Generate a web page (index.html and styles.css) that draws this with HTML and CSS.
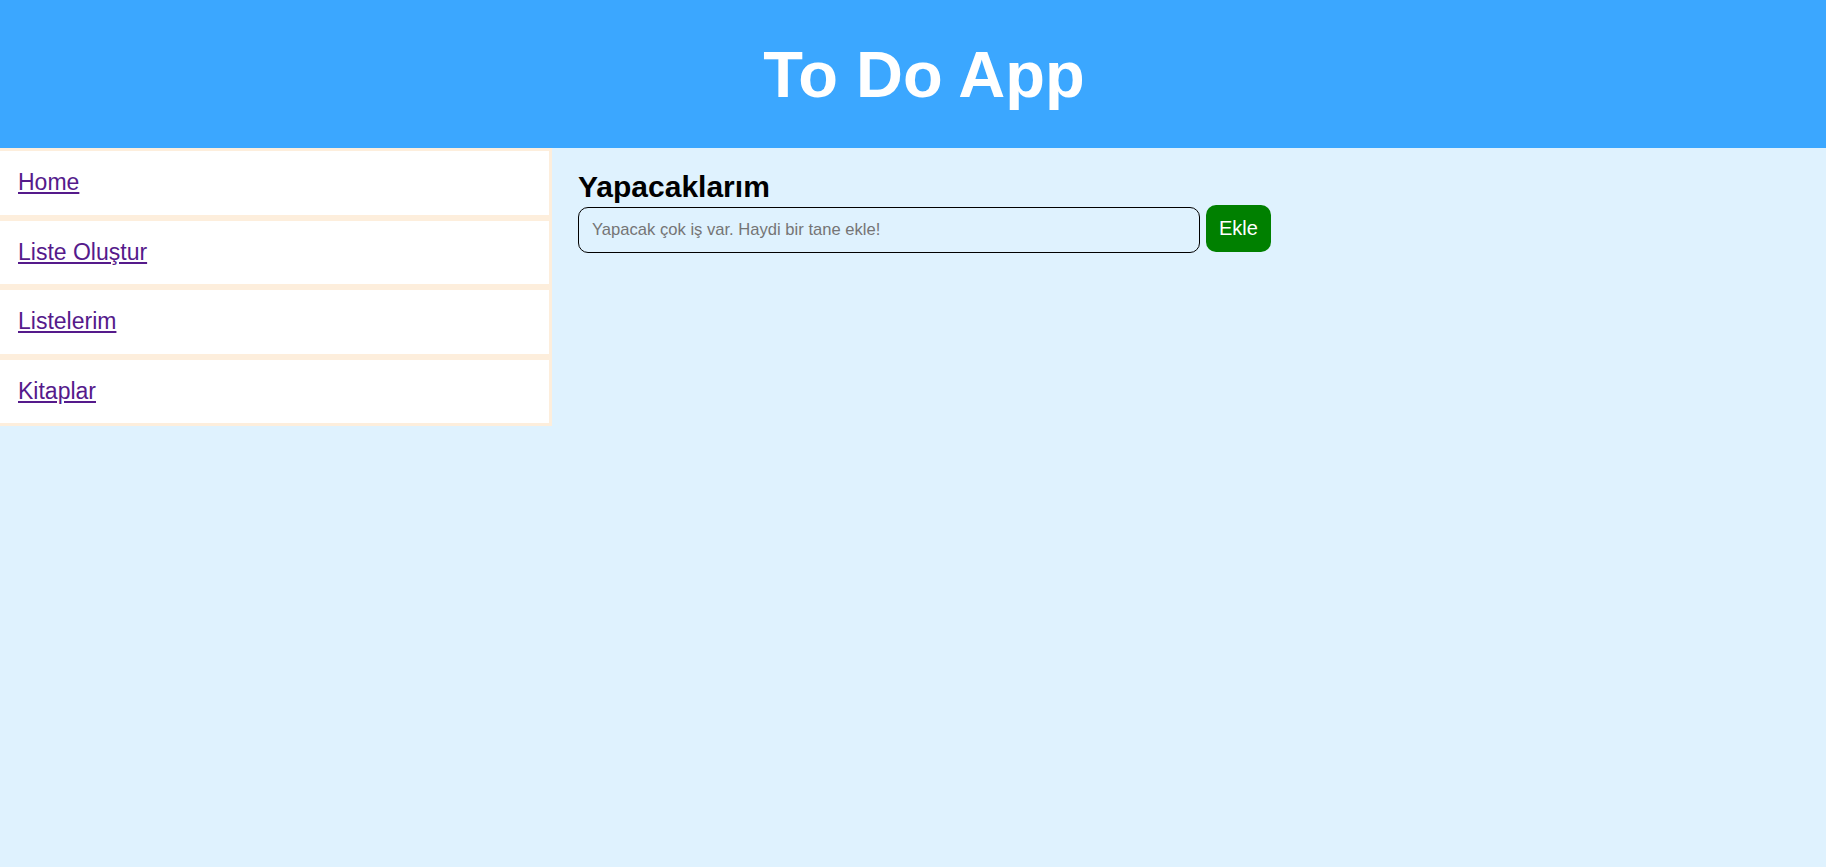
FILE: index.html
```html
<!DOCTYPE html>
<html lang="tr">
<head>
<meta charset="utf-8">
<title>To Do App</title>
<link rel="stylesheet" href="styles.css">
</head>
<body>
<header class="app-header">
  <h1 class="app-title">To Do App</h1>
</header>
<div class="layout">
  <nav class="sidebar">
    <div class="nav-item"><a href="#" class="nav-link">Home</a></div>
    <div class="nav-item"><a href="#" class="nav-link">Liste Oluştur</a></div>
    <div class="nav-item"><a href="#" class="nav-link">Listelerim</a></div>
    <div class="nav-item"><a href="#" class="nav-link">Kitaplar</a></div>
  </nav>
  <main class="content">
    <h2 class="content-title">Yapacaklarım</h2>
    <form class="add-row" onsubmit="return false;">
      <input class="todo-input" type="text" placeholder="Yapacak çok iş var. Haydi bir tane ekle!">
      <button class="add-btn" type="submit">Ekle</button>
    </form>
  </main>
</div>
</body>
</html>
```
FILE: styles.css
```css
html, body {
  margin: 0;
  padding: 0;
  height: 100%;
}
body {
  font-family: "Liberation Sans", Arial, sans-serif;
  background: #dff2fe;
  display: flex;
  flex-direction: column;
}
.app-header {
  background: #3ba7ff;
  height: 148px;
  display: flex;
  align-items: center;
  justify-content: center;
  padding-left: 22px;
  box-sizing: border-box;
  flex-shrink: 0;
}
.app-title {
  margin: 0;
  color: #ffffff;
  font-size: 65px;
  font-weight: bold;
}
.layout {
  display: flex;
  align-items: flex-start;
  flex: 1;
}
.sidebar {
  width: 552px;
  box-sizing: border-box;
  background: #fdeedc;
  display: flex;
  flex-direction: column;
  gap: 6px;
  padding: 3px 3px 3px 0;
  flex-shrink: 0;
}
.nav-item {
  background: #ffffff;
  height: 63.5px;
  box-sizing: border-box;
  padding: 18px 18px 0;
  font-size: 23px;
  line-height: 26px;
}
.nav-link {
  color: #551a8b;
  text-decoration: underline;
}
.content {
  padding: 23px 26px 0;
  flex: 1;
}
.content-title {
  margin: 0 0 2px;
  font-size: 30px;
  line-height: 32px;
  font-weight: bold;
  color: #000;
}
.add-row {
  display: flex;
  align-items: flex-start;
  gap: 6px;
  margin: 0;
}
.todo-input {
  width: 622px;
  height: 46px;
  box-sizing: border-box;
  margin-top: 2px;
  border: 1px solid #000;
  border-radius: 10px;
  background: #dff2fe;
  padding: 0 13px;
  font-family: "Liberation Sans", Arial, sans-serif;
  font-size: 16.6px;
  color: #000;
  outline: none;
}
.todo-input::placeholder {
  color: #757575;
}
.add-btn {
  height: 47px;
  box-sizing: border-box;
  padding: 0 13px;
  border: none;
  border-radius: 10px;
  background: #008000;
  color: #ffffff;
  font-family: "Liberation Sans", Arial, sans-serif;
  font-size: 20px;
  cursor: pointer;
}
```
